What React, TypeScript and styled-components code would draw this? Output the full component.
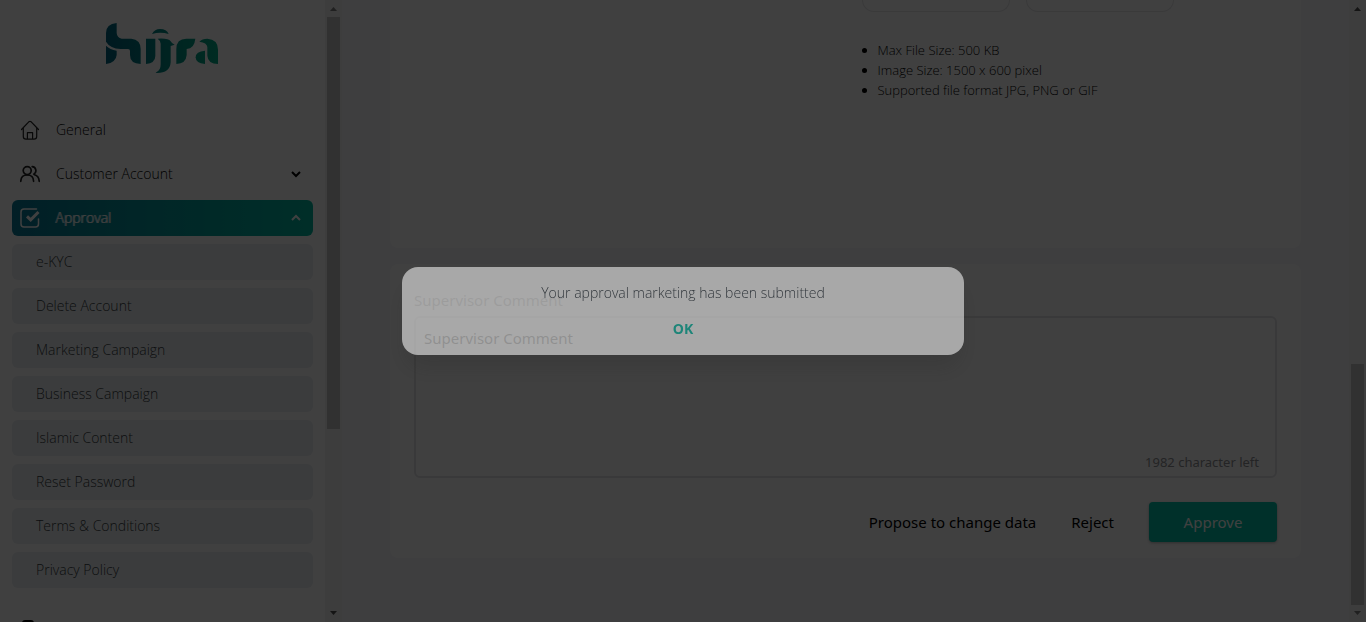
import React from "react";
import styled, { createGlobalStyle } from "styled-components";

const GlobalStyle = createGlobalStyle`
  *, *::before, *::after { box-sizing: border-box; }
  body {
    margin: 0;
    background: #f5f5f9;
    color: #000;
    font-family: "Open Sans", sans-serif;
    overflow: hidden;
  }
  button, textarea { font-family: inherit; }
`;

const Shell = styled.div`
  display: flex;
  height: 100vh;
  overflow: hidden;
`;

const Sidebar = styled.aside`
  flex: 0 0 325px;
  padding: 0 12px;
  background: #fff;
  overflow: hidden;
`;

const Brand = styled.div`
  display: flex;
  justify-content: center;
  height: 112px;
  padding: 22px 2px 0 0;
`;

const Menu = styled.nav`
  display: flex;
  flex-direction: column;
  gap: 8px;
`;

const MenuItem = styled.button<{ $active?: boolean; $apart?: boolean }>`
  display: flex;
  align-items: center;
  gap: 16px;
  flex: none;
  height: 36px;
  margin-top: ${(p) => (p.$apart ? "16px" : "0")};
  padding: 0 8px;
  border: 0;
  border-radius: 6px;
  background: ${(p) => (p.$active ? "linear-gradient(90deg, #087a96, #00b8a0)" : "transparent")};
  color: ${(p) => (p.$active ? "#fff" : "#000")};
  font-size: 14px;
  font-weight: 300;
  text-shadow: ${(p) => (p.$active ? "-1px 0 0 currentColor" : "none")};
  line-height: 20px;
  text-align: left;
`;

const MenuLabel = styled.span`
  flex: 1;
`;

const SubItem = styled.a`
  display: flex;
  align-items: center;
  height: 36px;
  padding: 0 24px;
  border-radius: 6px;
  background: #ebeff2;
  color: #363c42;
  font-size: 14px;
  font-weight: 300;
  line-height: 20px;
  text-decoration: none;
`;

const Bar = styled.div`
  display: flex;
  flex-direction: column;
  align-items: center;
  flex: 0 0 17px;
  background: #f1f1f1;
`;

const Arrow = styled.svg`
  flex: none;
  width: 17px;
  height: 17px;
`;

const Track = styled.div<{ $end?: boolean }>`
  display: flex;
  flex: 1;
  flex-direction: column;
  justify-content: ${(p) => (p.$end ? "flex-end" : "flex-start")};
`;

const Thumb = styled.div<{ $share: number }>`
  width: 13px;
  height: ${(p) => p.$share}%;
  background: #c1c1c1;
`;

const Main = styled.main`
  display: flex;
  flex: 1;
  flex-direction: column;
  gap: 16px;
  min-width: 0;
  padding: 0 48px 64px;
`;

const UploadCard = styled.section`
  display: grid;
  grid-template-columns: 1fr 1fr;
  column-gap: 32px;
  flex: 1;
  padding: 0 24px;
  border-radius: 0 0 8px 8px;
  background: #fff;
`;

const UploadColumn = styled.div`
  grid-column: 2;
`;

const Slots = styled.div`
  display: flex;
  gap: 16px;
`;

const Slot = styled.div`
  width: 148px;
  height: 12px;
  border: 1px solid #e5e5e7;
  border-top: 0;
  border-radius: 0 0 12px 12px;
`;

const Rules = styled.ul`
  margin: 28px 0 0;
  padding-left: 16px;
  font-size: 13px;
  font-weight: 300;
  line-height: 20px;
`;

const CommentCard = styled.section`
  display: flex;
  flex-direction: column;
  padding: 24px 24px 16px;
  border-radius: 8px;
  background: #fff;
  font-family: "Noto Sans", sans-serif;
`;

const FieldLabel = styled.label`
  margin-bottom: 4px;
  color: #9a9a9a;
  font-size: 15px;
  line-height: 24px;
`;

const Field = styled.div`
  display: flex;
  flex-direction: column;
  border: 2px solid #e4e4e6;
  border-radius: 6px;
`;

const CommentBox = styled.textarea`
  height: 134px;
  padding: 8px;
  border: 0;
  outline: 0;
  resize: none;
  background: transparent;
  color: #333;
  font-size: 15px;
  line-height: 24px;
  &::placeholder { color: #333; opacity: 1; }
`;

const Counter = styled.span`
  padding: 0 16px 4px;
  color: #8f9094;
  font-size: 13px;
  line-height: 20px;
  text-align: right;
`;

const Actions = styled.div`
  display: flex;
  justify-content: flex-end;
  gap: 3px;
  margin-top: 24px;
`;

const Action = styled.button<{ $primary?: boolean }>`
  height: 40px;
  padding: 0 16px;
  min-width: ${(p) => (p.$primary ? "128px" : "0")};
  margin-left: ${(p) => (p.$primary ? "16px" : "0")};
  border: 0;
  border-radius: 4px;
  background: ${(p) => (p.$primary ? "#00bfa8" : "transparent")};
  box-shadow: ${(p) => (p.$primary ? "0 1px 3px rgba(0, 0, 0, 0.3)" : "none")};
  color: ${(p) => (p.$primary ? "#fff" : "#000")};
  font-size: 15px;
  line-height: 24px;
`;

const Backdrop = styled.div`
  position: fixed;
  inset: 0;
  display: flex;
  align-items: center;
  justify-content: center;
  background: rgba(0, 0, 0, 0.75);
`;

const Dialog = styled.div`
  display: flex;
  flex-direction: column;
  align-items: center;
  gap: 16px;
  width: 562px;
  max-width: 90%;
  padding: 16px;
  border-radius: 16px;
  background: #fff;
  box-shadow: 0 16px 24px -4px rgba(0, 0, 0, 0.2);
  opacity: 0.54;
`;

const Message = styled.p`
  margin: 0;
  color: #1f2933;
  font-size: 14px;
  font-weight: 300;
  line-height: 20px;
`;

const Confirm = styled.button`
  padding: 0;
  border: 0;
  background: transparent;
  color: #00bfa8;
  font-size: 14px;
  font-weight: 700;
  line-height: 20px;
`;

const Logo = () => (
  <svg width="112" height="52" viewBox="0 -3 336 156" fill="url(#brand)" aria-hidden="true">
    <defs>
      <linearGradient id="brand" gradientUnits="userSpaceOnUse" x1="0" y1="0" x2="336" y2="0">
        <stop offset="0" stopColor="#006480" />
        <stop offset="1" stopColor="#00ac86" />
      </linearGradient>
    </defs>
    <path d="M0 30Q0 3 32 0V30Q33 44 47 47H76Q104 50 104 78V123Q72 122 72 96V84Q72 78 66 78H44Q12 76 0 56Z" />
    <path d="M0 68Q12 80 32 83V96Q30 119 0 123Z" />
    <path d="M120 47H148V98Q148 120 120 123Z" />
    <path d="M138 33Q146 18 162 18Q182 18 188 33Q176 29 163 29Q150 29 138 33Z" />
    <path d="M155 47Q188 45 194 55Q198 63 206 65L194 69V118Q192 150 153 150Q146 149 152 147Q164 142 164 124V62Q163 52 155 47Z" />
    <path d="M211 78Q211 47 241 47H268Q265 77 242 78V96Q240 122 211 123Z" />
    <path d="M280 56Q288 47 304 47Q336 49 336 80V123Q306 123 304 98V72Q303 59 280 56Z" />
    <path d="M297 83V123Q269 121 269 103Q269 85 297 83Z" />
  </svg>
);

const iconProps = {
  width: 20,
  height: 20,
  viewBox: "0 0 20 20",
  fill: "none",
  stroke: "currentColor",
  strokeLinecap: "round" as const,
  strokeLinejoin: "round" as const,
  "aria-hidden": true,
};

const HouseIcon = () => (
  <svg {...iconProps} stroke="#222" strokeWidth="1.2">
    <path d="M1.5 9.5 8.8 1.8Q10 .8 11.2 1.8L18.5 9.5M3.3 8.2V16.5Q3.3 19.2 6 19.2H14Q16.7 19.2 16.7 16.5V8.2M7.4 19V12.7H12.6V19" />
  </svg>
);

const PeopleIcon = () => (
  <svg {...iconProps} stroke="#222" strokeWidth="1.7">
    <circle cx="7.2" cy="6.6" r="4" />
    <path d="M.8 17.3C.9 13.2 3.5 11 7.2 11S13.5 13.2 13.6 17.3M12.2 2.7A4 4 0 0 1 13.8 10.2M14.6 10.8C17.5 11.6 19 13.8 19.2 17.3" />
  </svg>
);

const CheckIcon = () => (
  <svg {...iconProps} strokeWidth="1.5">
    <path d="M16.5 1H4Q1 1 1 4V16Q1 19 4 19H15.5Q18.5 19 18.5 16V11" />
    <path d="M7 8.3 10.7 11.8 18.5 4" strokeWidth="3" strokeLinecap="butt" strokeLinejoin="miter" />
  </svg>
);

const DeviceIcon = () => (
  <svg {...iconProps} strokeWidth="2">
    <rect x="3" y="1" width="10" height="18" rx="2" fill="currentColor" />
  </svg>
);

const Chevron = ({ up }: { up?: boolean }) => (
  <svg width="18" height="10" viewBox="0 0 18 10" fill="none" stroke="currentColor" strokeWidth="2" aria-hidden="true">
    <path d={up ? "M5 7 9 3 13 7" : "M5 3 9 7 13 3"} />
  </svg>
);

const Scrollbar = ({ share, end }: { share: number; end?: boolean }) => (
  <Bar aria-hidden="true">
    <Arrow viewBox="0 0 17 17">
      <path d="M5 11 8.5 7 12 11Z" fill={end ? "#505050" : "#808080"} />
    </Arrow>
    <Track $end={end}>
      <Thumb $share={share} />
    </Track>
    <Arrow viewBox="0 0 17 17">
      <path d="M5 6 8.5 10 12 6Z" fill={end ? "#808080" : "#505050"} />
    </Arrow>
  </Bar>
);

const approvals = [
  "e-KYC",
  "Delete Account",
  "Marketing Campaign",
  "Business Campaign",
  "Islamic Content",
  "Reset Password",
  "Terms & Conditions",
  "Privacy Policy",
];

export default function App() {
  return (
    <>
      <GlobalStyle />
      <Shell>
        <Sidebar>
          <Brand>
            <Logo />
          </Brand>
          <Menu>
            <MenuItem>
              <HouseIcon />
              <MenuLabel>General</MenuLabel>
            </MenuItem>
            <MenuItem>
              <PeopleIcon />
              <MenuLabel>Customer Account</MenuLabel>
              <Chevron />
            </MenuItem>
            <MenuItem $active>
              <CheckIcon />
              <MenuLabel>Approval</MenuLabel>
              <Chevron up />
            </MenuItem>
            {approvals.map((name) => (
              <SubItem key={name} href="#">
                {name}
              </SubItem>
            ))}
            <MenuItem $apart>
              <DeviceIcon />
            </MenuItem>
          </Menu>
        </Sidebar>
        <Scrollbar share={70} />
        <Main>
          <UploadCard>
            <UploadColumn>
              <Slots>
                <Slot />
                <Slot />
              </Slots>
              <Rules>
                <li>Max File Size: 500 KB</li>
                <li>Image Size: 1500 x 600 pixel</li>
                <li>Supported file format JPG, PNG or GIF</li>
              </Rules>
            </UploadColumn>
          </UploadCard>
          <CommentCard>
            <FieldLabel htmlFor="comment">Supervisor Comment</FieldLabel>
            <Field>
              <CommentBox id="comment" placeholder="Supervisor Comment" />
              <Counter>1982 character left</Counter>
            </Field>
            <Actions>
              <Action>Propose to change data</Action>
              <Action>Reject</Action>
              <Action $primary>Approve</Action>
            </Actions>
          </CommentCard>
        </Main>
        <Scrollbar share={41} end />
      </Shell>
      <Backdrop>
        <Dialog role="dialog" aria-modal="true">
          <Message>Your approval marketing has been submitted</Message>
          <Confirm>OK</Confirm>
        </Dialog>
      </Backdrop>
    </>
  );
}
